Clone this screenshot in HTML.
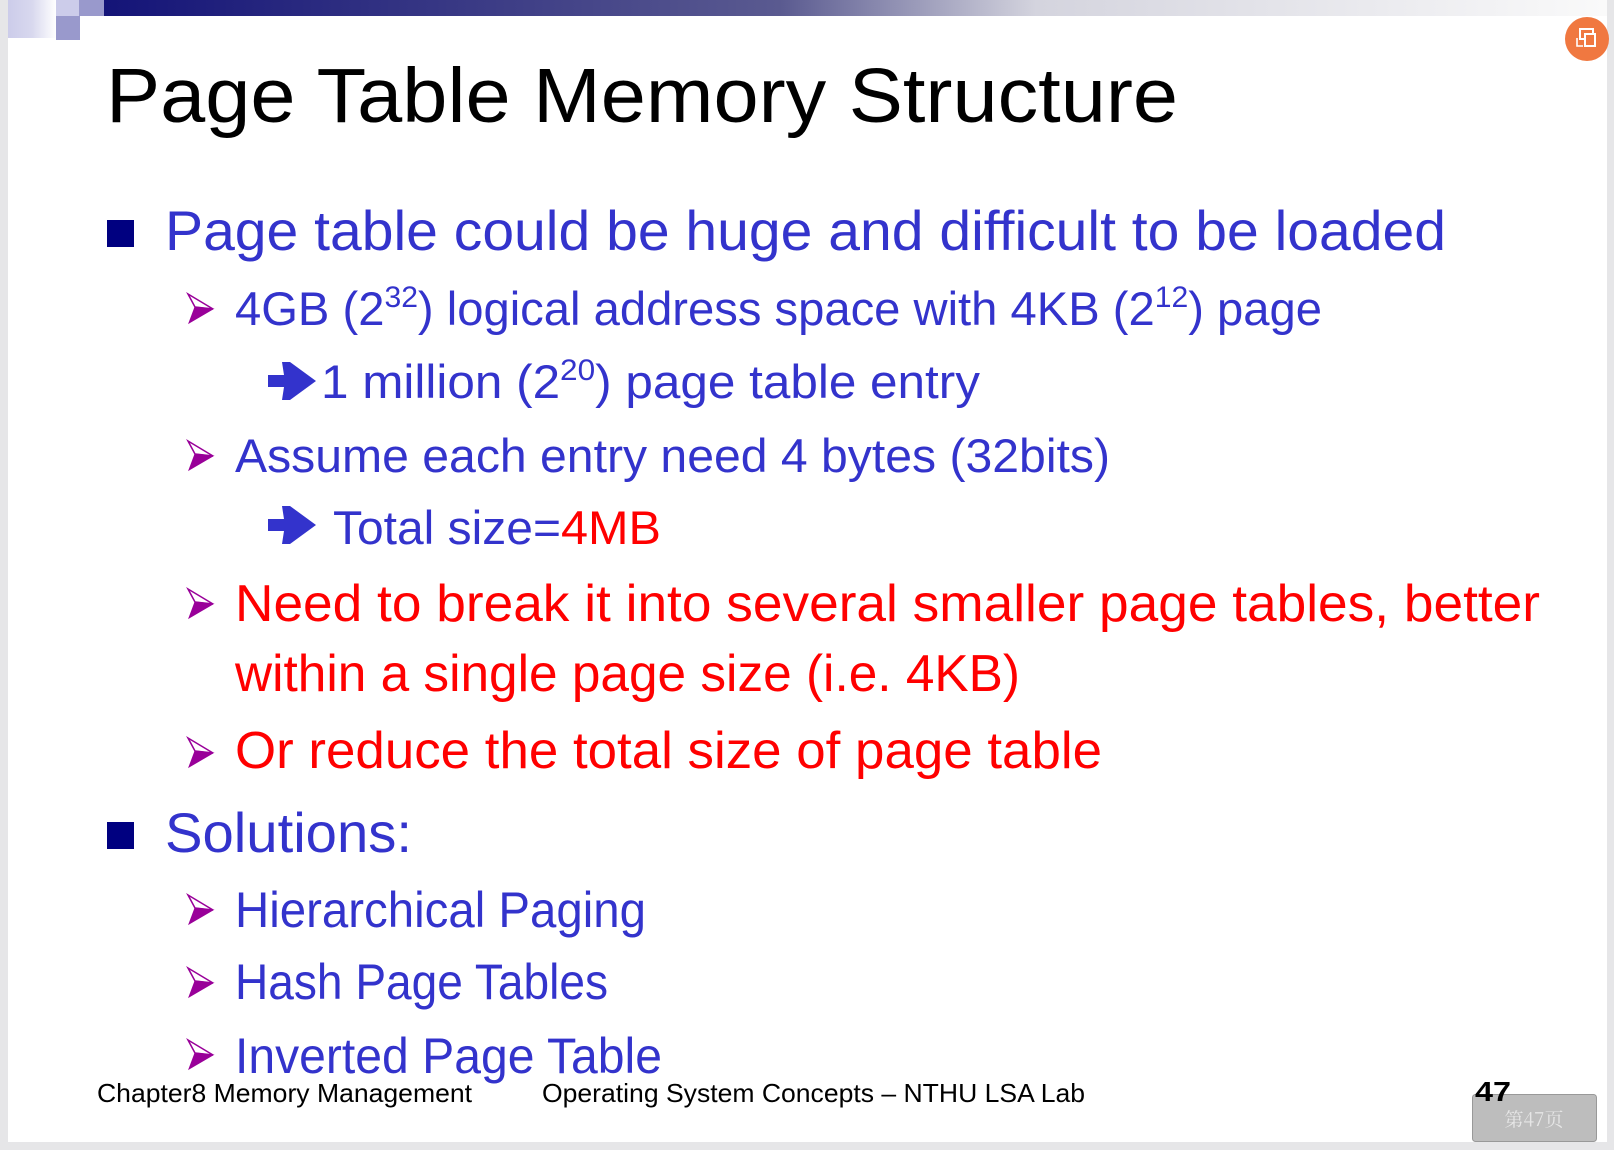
<!DOCTYPE html>
<html><head><meta charset="utf-8"><style>
html,body{margin:0;padding:0;background:#fff;}
svg{display:block}
</style></head><body>
<svg width="1614" height="1150" viewBox="0 0 1614 1150" xmlns="http://www.w3.org/2000/svg">
<defs>
<linearGradient id="bar" x1="0" x2="1" y1="0" y2="0">
<stop offset="0" stop-color="#141478"/>
<stop offset="0.45" stop-color="#5a5a90"/>
<stop offset="0.62" stop-color="#d4d4de"/>
<stop offset="1" stop-color="#fafafa"/>
</linearGradient>
<linearGradient id="sq" x1="0" x2="1" y1="0" y2="0">
<stop offset="0" stop-color="#ccccea"/>
<stop offset="0.5" stop-color="#d8d8ee"/>
<stop offset="1" stop-color="#ffffff"/>
</linearGradient>
<g id="ah">
<polygon points="0,-15 25,0 7,-2" fill="#fff" stroke="#990099" stroke-width="1.5"/>
<polygon points="7,-2 25,0 1,14" fill="#990099" stroke="#990099" stroke-width="1"/>
</g>
<g id="ba">
<polygon points="0,-6 16,-6 14,-19 22,-19 48,0 22,19 14,19 16,6 0,6" fill="#3333cc"/>
</g>
</defs>
<rect width="1614" height="1150" fill="#e6e6e8"/>
<rect x="8" y="0" width="1599" height="1142" fill="#fff"/>
<rect x="104" y="0" width="1503" height="16" fill="url(#bar)"/>
<rect x="8" y="0" width="48" height="38" fill="url(#sq)"/>
<rect x="56" y="0" width="23" height="16" fill="#ccccea"/>
<rect x="79" y="0" width="25" height="16" fill="#9999cc"/>
<rect x="56" y="16" width="24" height="24" fill="#9999cc"/>
<circle cx="1587" cy="39" r="22" fill="#f07840"/>
<rect x="1580" y="29" width="13" height="10" fill="none" stroke="#fff" stroke-width="2"/>
<rect x="1585" y="34" width="10" height="12" fill="#f07840" stroke="#fff" stroke-width="2"/>
<path d="M1577 38 v8 h6" fill="none" stroke="#fff" stroke-width="1.6"/>

<g font-family="Liberation Sans, sans-serif">
<text x="106" y="122" font-size="77" fill="#000" textLength="1072" lengthAdjust="spacingAndGlyphs">Page Table Memory Structure</text>
<rect x="107" y="220" width="27" height="27" fill="#000080"/>
<text x="165" y="250" font-size="56" fill="#3333cc" textLength="1281" lengthAdjust="spacingAndGlyphs">Page table could be huge and difficult to be loaded</text>
<use href="#ah" x="188" y="309"/>
<text x="235" y="325" font-size="47" fill="#3333cc" textLength="1087" lengthAdjust="spacingAndGlyphs">4GB (2<tspan font-size="30" dy="-18">32</tspan><tspan dy="18">) logical address space with 4KB (2</tspan><tspan font-size="30" dy="-18">12</tspan><tspan dy="18">) page</tspan></text>
<use href="#ba" x="268" y="381"/>
<text x="321" y="398" font-size="47" fill="#3333cc" textLength="659" lengthAdjust="spacingAndGlyphs">1 million (2<tspan font-size="30" dy="-18">20</tspan><tspan dy="18">) page table entry</tspan></text>
<use href="#ah" x="188" y="456"/>
<text x="235" y="472" font-size="47" fill="#3333cc" textLength="875" lengthAdjust="spacingAndGlyphs">Assume each entry need 4 bytes (32bits)</text>
<use href="#ba" x="268" y="525"/>
<text x="333" y="544" font-size="47" fill="#3333cc" textLength="228" lengthAdjust="spacingAndGlyphs">Total size=</text>
<text x="561" y="544" font-size="47" fill="#ff0000" textLength="100" lengthAdjust="spacingAndGlyphs">4MB</text>
<use href="#ah" x="188" y="604"/>
<text x="235" y="621" font-size="52" fill="#ff0000" textLength="1305" lengthAdjust="spacingAndGlyphs">Need to break it into several smaller page tables, better</text>
<text x="235" y="691" font-size="52" fill="#ff0000" textLength="785" lengthAdjust="spacingAndGlyphs">within a single page size (i.e. 4KB)</text>
<use href="#ah" x="188" y="753"/>
<text x="235" y="768" font-size="52" fill="#ff0000" textLength="867" lengthAdjust="spacingAndGlyphs">Or reduce the total size of page table</text>
<rect x="107" y="822" width="27" height="27" fill="#000080"/>
<text x="165" y="852" font-size="56" fill="#3333cc" textLength="247" lengthAdjust="spacingAndGlyphs">Solutions:</text>
<use href="#ah" x="188" y="910"/>
<text x="235" y="927" font-size="50" fill="#3333cc" textLength="411" lengthAdjust="spacingAndGlyphs">Hierarchical Paging</text>
<use href="#ah" x="188" y="983"/>
<text x="235" y="999" font-size="50" fill="#3333cc" textLength="373" lengthAdjust="spacingAndGlyphs">Hash Page Tables</text>
<use href="#ah" x="188" y="1055"/>
<text x="235" y="1073" font-size="50" fill="#3333cc" textLength="427" lengthAdjust="spacingAndGlyphs">Inverted Page Table</text>
<text x="97" y="1102" font-size="26" fill="#000" textLength="375" lengthAdjust="spacingAndGlyphs">Chapter8 Memory Management</text>
<text x="542" y="1102" font-size="26" fill="#000" textLength="543" lengthAdjust="spacingAndGlyphs">Operating System Concepts – NTHU LSA Lab</text>
</g>
<rect x="1472.5" y="1094.5" width="124" height="47" rx="3" fill="#bdbdbd" stroke="#999" stroke-width="1"/>
<text x="1534" y="1126" font-size="19" fill="#e6e6e6" text-anchor="middle" font-family="Noto Serif CJK SC, serif">第47页</text>
<text x="1475" y="1101" font-size="28" font-weight="bold" fill="#000" font-family="Liberation Sans, sans-serif" textLength="36" lengthAdjust="spacingAndGlyphs">47</text>
</svg>
</body></html>
